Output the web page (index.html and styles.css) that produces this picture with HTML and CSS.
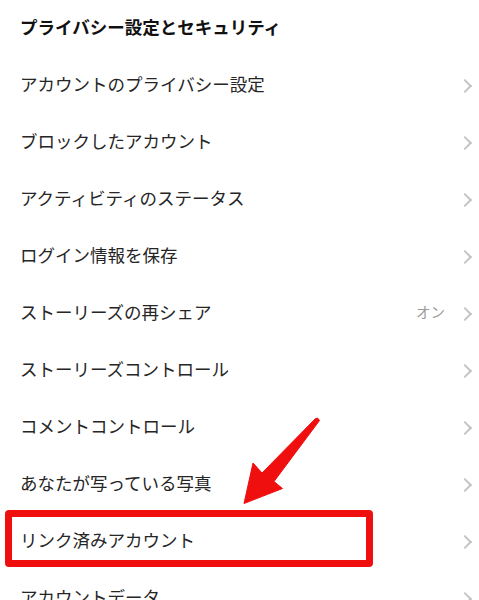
FILE: index.html
```html
<!DOCTYPE html>
<html lang="ja">
<head>
    <meta charset="UTF-8">
    <meta name="viewport" content="width=device-width, initial-scale=1.0">
    <title>プライバシー設定とセキュリティ</title>
    <link rel="stylesheet" href="styles.css">
</head>
<body>

<div class="settings">
    <h1 class="section-title">プライバシー設定とセキュリティ</h1>

    <ul class="menu">
        <li class="menu-item"><span class="label">アカウントのプライバシー設定</span><span class="chevron"></span></li>
        <li class="menu-item"><span class="label">ブロックしたアカウント</span><span class="chevron"></span></li>
        <li class="menu-item"><span class="label">アクティビティのステータス</span><span class="chevron"></span></li>
        <li class="menu-item"><span class="label">ログイン情報を保存</span><span class="chevron"></span></li>
        <li class="menu-item"><span class="label">ストーリーズの再シェア</span><span class="value">オン</span><span class="chevron"></span></li>
        <li class="menu-item"><span class="label">ストーリーズコントロール</span><span class="chevron"></span></li>
        <li class="menu-item"><span class="label">コメントコントロール</span><span class="chevron"></span></li>
        <li class="menu-item"><span class="label">あなたが写っている写真</span><span class="chevron"></span></li>
        <li class="menu-item highlighted"><span class="label">リンク済みアカウント</span><span class="chevron"></span></li>
        <li class="menu-item"><span class="label">アカウントデータ</span><span class="chevron"></span></li>
    </ul>

    <!-- annotation arrow -->
    <svg class="pointer" width="479" height="600" viewBox="0 0 479 600">
        <path d="M315.5 418.5 Q318 417 319.5 420.5 L274 481.5 L282.5 488.5 L244 503.5 L253 463 L262 473 Z" fill="#f00f0f" stroke="#f00f0f" stroke-width="1" stroke-linejoin="round"/>
    </svg>
</div>

</body>
</html>
```

FILE: styles.css
```css
body {
    margin: 0;
    background: #fff;
    font-family: "Noto Sans CJK JP", "Noto Sans", sans-serif;
}

.settings {
    position: relative;
    width: 479px;
    height: 600px;
    overflow: hidden;
}

.section-title {
    margin: 0;
    height: 57px;
    box-sizing: border-box;
    padding: 0 0 4px 20px;
    display: flex;
    align-items: center;
    font-size: 17.5px;
    font-weight: 700;
    color: #111;
}

.menu {
    list-style: none;
    margin: 0;
    padding: 0;
}

.menu-item {
    position: relative;
    height: 57px;
    box-sizing: border-box;
    display: flex;
    align-items: center;
    padding: 0 6px 4px 20px;
    font-size: 17.5px;
    color: #262626;
}

.label {
    flex: 1;
}

.value {
    font-size: 14.5px;
    color: #9a9a9a;
    margin-right: 15px;
}

.chevron {
    width: 8px;
    height: 8px;
    border-top: 2px solid #c4c4c4;
    border-right: 2px solid #c4c4c4;
    transform: rotate(45deg);
    margin: 4px 3px 0 0;
}

/* red box around the highlighted row */
.highlighted::after {
    content: "";
    position: absolute;
    left: 5px;
    top: -3px;
    width: 368px;
    height: 57px;
    box-sizing: border-box;
    border: 7px solid #f00f0f;
    border-radius: 4px;
}

.pointer {
    position: absolute;
    left: 0;
    top: 0;
}
```
